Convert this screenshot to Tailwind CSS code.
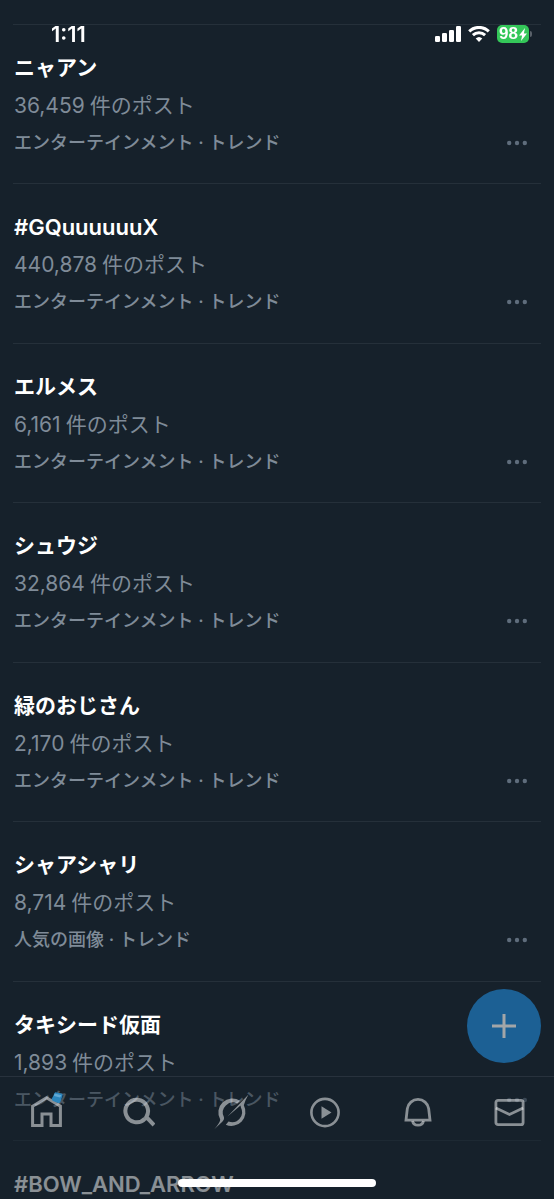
<!DOCTYPE html>
<html lang="ja">
<head>
<meta charset="utf-8">
<meta name="viewport" content="width=device-width, initial-scale=1">
<title>トレンド</title>
<script src="https://cdn.jsdelivr.net/npm/@tailwindcss/browser@4"></script>
</head>
<body class="h-screen overflow-hidden bg-[#16212b] font-[Inter,'Noto_Sans_CJK_JP',sans-serif] text-[#7f8b98]">

<header class="fixed inset-x-0 top-0 z-20 flex h-[68px] items-center justify-between pl-[51px] pr-[22px] text-white">
  <time class="text-[22px] leading-6 font-semibold">1:11</time>
  <div class="flex items-center gap-[7px]">
    <svg class="h-4 w-[26px]" viewBox="0 0 26 16" fill="currentColor" aria-label="電波">
      <rect x="0" y="10" width="5" height="6" rx="1.3"/><rect x="7" y="7" width="5" height="9" rx="1.3"/><rect x="14" y="4" width="5" height="12" rx="1.3"/><rect x="21" y="0" width="5" height="16" rx="1.3"/>
    </svg>
    <svg class="h-4 w-[22px]" viewBox="0 0 22 16" fill="none" stroke="currentColor" stroke-width="3" aria-label="Wi-Fi">
      <path d="M1.2 5.400a14 14 0 0 1 19.600 0"/><path d="M4.900 9.200a8.800 8.800 0 0 1 12.200 0"/><path d="M11 16l-3.300-3.400a4.800 4.800 0 0 1 6.600 0z" fill="currentColor" stroke="none"/>
    </svg>
    <div class="flex items-center gap-px">
      <div class="flex h-[18px] w-8 items-center justify-center gap-px rounded-[5px] bg-[#34c759] font-['Liberation_Sans',sans-serif] text-[17px] leading-[18px] font-bold">98<svg class="h-[13px] w-2" viewBox="0 0 8 13" fill="currentColor"><path d="M6 0L0 7.400h3.100L2 13 8 5.400H4.900z"/></svg></div>
      <span class="h-[6px] w-[2px] rounded-r-full bg-[#59616a]"></span>
    </div>
  </div>
</header>

<main class="mx-[13px] pt-6">
  <ul>
    <li class="border-t border-[#25303a] pt-[28px] pb-[27px] pl-px even:pb-[28px]">
      <h2 class="text-[21px] leading-[30px] font-semibold text-white">ニャアン</h2>
      <p class="mt-2 text-[21px] leading-[30px]"><span class="mr-[5px]">36,459</span>件のポスト</p>
      <div class="mt-[9px] flex items-center justify-between pr-[14px]"><p class="text-[18px] leading-[26px] font-medium">エンターテインメント · トレンド</p><button type="button" aria-label="その他"><svg class="h-5 w-5" viewBox="0 0 20 20" fill="#5f6d7c"><circle cx="2.200" cy="10" r="2.200"/><circle cx="10" cy="10" r="2.200"/><circle cx="17.800" cy="10" r="2.200"/></svg></button></div>
    </li>
    <li class="border-t border-[#25303a] pt-[28px] pb-[27px] pl-px even:pb-[28px]">
      <h2 class="text-[22px] leading-[30px] font-semibold text-white">#GQuuuuuuX</h2>
      <p class="mt-2 text-[21px] leading-[30px]"><span class="mr-[5px]">440,878</span>件のポスト</p>
      <div class="mt-[9px] flex items-center justify-between pr-[14px]"><p class="text-[18px] leading-[26px] font-medium">エンターテインメント · トレンド</p><button type="button" aria-label="その他"><svg class="h-5 w-5" viewBox="0 0 20 20" fill="#5f6d7c"><circle cx="2.200" cy="10" r="2.200"/><circle cx="10" cy="10" r="2.200"/><circle cx="17.800" cy="10" r="2.200"/></svg></button></div>
    </li>
    <li class="border-t border-[#25303a] pt-[28px] pb-[27px] pl-px even:pb-[28px]">
      <h2 class="text-[21px] leading-[30px] font-semibold text-white">エルメス</h2>
      <p class="mt-2 text-[21px] leading-[30px]"><span class="mr-[5px]">6,161</span>件のポスト</p>
      <div class="mt-[9px] flex items-center justify-between pr-[14px]"><p class="text-[18px] leading-[26px] font-medium">エンターテインメント · トレンド</p><button type="button" aria-label="その他"><svg class="h-5 w-5" viewBox="0 0 20 20" fill="#5f6d7c"><circle cx="2.200" cy="10" r="2.200"/><circle cx="10" cy="10" r="2.200"/><circle cx="17.800" cy="10" r="2.200"/></svg></button></div>
    </li>
    <li class="border-t border-[#25303a] pt-[28px] pb-[27px] pl-px even:pb-[28px]">
      <h2 class="text-[21px] leading-[30px] font-semibold text-white">シュウジ</h2>
      <p class="mt-2 text-[21px] leading-[30px]"><span class="mr-[5px]">32,864</span>件のポスト</p>
      <div class="mt-[9px] flex items-center justify-between pr-[14px]"><p class="text-[18px] leading-[26px] font-medium">エンターテインメント · トレンド</p><button type="button" aria-label="その他"><svg class="h-5 w-5" viewBox="0 0 20 20" fill="#5f6d7c"><circle cx="2.200" cy="10" r="2.200"/><circle cx="10" cy="10" r="2.200"/><circle cx="17.800" cy="10" r="2.200"/></svg></button></div>
    </li>
    <li class="border-t border-[#25303a] pt-[28px] pb-[27px] pl-px even:pb-[28px]">
      <h2 class="text-[21px] leading-[30px] font-semibold text-white">緑のおじさん</h2>
      <p class="mt-2 text-[21px] leading-[30px]"><span class="mr-[5px]">2,170</span>件のポスト</p>
      <div class="mt-[9px] flex items-center justify-between pr-[14px]"><p class="text-[18px] leading-[26px] font-medium">エンターテインメント · トレンド</p><button type="button" aria-label="その他"><svg class="h-5 w-5" viewBox="0 0 20 20" fill="#5f6d7c"><circle cx="2.200" cy="10" r="2.200"/><circle cx="10" cy="10" r="2.200"/><circle cx="17.800" cy="10" r="2.200"/></svg></button></div>
    </li>
    <li class="border-t border-[#25303a] pt-[28px] pb-[27px] pl-px even:pb-[28px]">
      <h2 class="text-[21px] leading-[30px] font-semibold text-white">シャアシャリ</h2>
      <p class="mt-2 text-[21px] leading-[30px]"><span class="mr-[5px]">8,714</span>件のポスト</p>
      <div class="mt-[9px] flex items-center justify-between pr-[14px]"><p class="text-[18px] leading-[26px] font-medium">人気の画像 · トレンド</p><button type="button" aria-label="その他"><svg class="h-5 w-5" viewBox="0 0 20 20" fill="#5f6d7c"><circle cx="2.200" cy="10" r="2.200"/><circle cx="10" cy="10" r="2.200"/><circle cx="17.800" cy="10" r="2.200"/></svg></button></div>
    </li>
    <li class="border-t border-[#25303a] pt-[28px] pb-[27px] pl-px even:pb-[28px]">
      <h2 class="text-[21px] leading-[30px] font-semibold text-white">タキシード仮面</h2>
      <p class="mt-2 text-[21px] leading-[30px]"><span class="mr-[5px]">1,893</span>件のポスト</p>
      <div class="mt-[9px] flex items-center justify-between pr-[14px]"><p class="text-[18px] leading-[26px] font-medium">エンターテインメント · トレンド</p><button type="button" aria-label="その他"><svg class="h-5 w-5" viewBox="0 0 20 20" fill="#5f6d7c"><circle cx="2.200" cy="10" r="2.200"/><circle cx="10" cy="10" r="2.200"/><circle cx="17.800" cy="10" r="2.200"/></svg></button></div>
    </li>
    <li class="border-t border-[#25303a] pt-[28px] pl-px">
      <h2 class="text-[22px] leading-[30px] font-semibold text-white">#BOW_AND_ARROW</h2>
    </li>
  </ul>
</main>

<button type="button" aria-label="ポストする" class="fixed right-[13px] bottom-[136px] z-10 flex h-[74px] w-[74px] items-center justify-center rounded-full bg-[#1c6094]">
  <svg class="h-6 w-6" viewBox="0 0 24 24" stroke="#a3a6a8" stroke-width="3"><path d="M12 0v24M0 12h24"/></svg>
</button>

<nav class="fixed inset-x-0 bottom-0 z-10 h-[123px] border-t border-[#28323d] bg-[#16212b]/50 pt-[19px] pr-7 pl-[30px] text-white/50">
  <div class="flex justify-between">
    <a href="#home" aria-label="ホーム" class="relative">
      <svg class="h-8 w-8" viewBox="0 0 32 32" fill="none" stroke="currentColor" stroke-width="3"><path d="M2.600 10.200L16.500 1.800l13.900 8.400v19.300H21V18h-9v11.500H2.600z"/></svg>
      <svg class="absolute -top-1 -right-px h-3 w-3" viewBox="0 0 12 12"><path d="M3.500 1.200Q4 0 5.500.5L10.500 1.500Q12 2 11.500 3.500L9.500 9.500Q9 11.500 7 11L2 9Q.5 8 1 6.500z" fill="#2c86bd"/><path d="M3.500 1.500l7 1.700-1.500 2.300-6-1.500z" fill="#61a8d5"/></svg>
    </a>
    <a href="#search" aria-label="検索"><svg class="h-8 w-8" viewBox="0 0 32 32" fill="none" stroke="currentColor" stroke-width="4"><path d="M22 22.700A11.300 11.300 0 1 1 23.300 21L31 29"/></svg></a>
    <a href="#grok" aria-label="Grok"><svg class="h-8 w-8 overflow-visible" viewBox="0 0 32 32" fill="currentColor"><path d="M24 4.800A14 14 0 0 0 4.200 23.500Q4.500 26-1.500 33L5.500 26.500Q9 23.500 7.800 20.800A10 10 0 0 1 21.300 7.600z"/><path d="M11.500 20.500L32.500-1.500Q29 4.500 27.800 9.300A14 14 0 0 1 9.800 28.700L12.500 25.500A10 10 0 0 0 24.900 11.500L24.500 9.500z"/></svg></a>
    <a href="#video" aria-label="動画"><svg class="h-8 w-8" viewBox="0 0 32 32" fill="none" stroke="currentColor" stroke-width="2.600"><circle cx="17" cy="16.500" r="13.600"/><path d="M13.500 10.200v12.600L23.500 16.500z" fill="currentColor" stroke="none"/></svg></a>
    <a href="#notifications" aria-label="通知"><svg class="h-8 w-8" viewBox="0 0 32 32" fill="none" stroke="currentColor" stroke-width="2.800"><path d="M5 24.200l1.300-11.400a10.800 10.800 0 0 1 21.400 0L29 24.200z"/><path d="M11.500 25a5.600 5.200 0 0 0 11 0"/></svg></a>
    <a href="#messages" aria-label="メッセージ"><svg class="h-8 w-8" viewBox="0 0 32 32" fill="none" stroke="currentColor" stroke-width="2.800"><rect x="1.900" y="4.400" width="27.200" height="24.200" rx="2.200"/><path d="M1.900 12L15.500 18.500l13.600-6.500"/></svg></a>
  </div>
  <div class="absolute bottom-3 left-1/2 h-2 w-[198px] -translate-x-1/2 rounded-full bg-white"></div>
</nav>
</body>
</html>
